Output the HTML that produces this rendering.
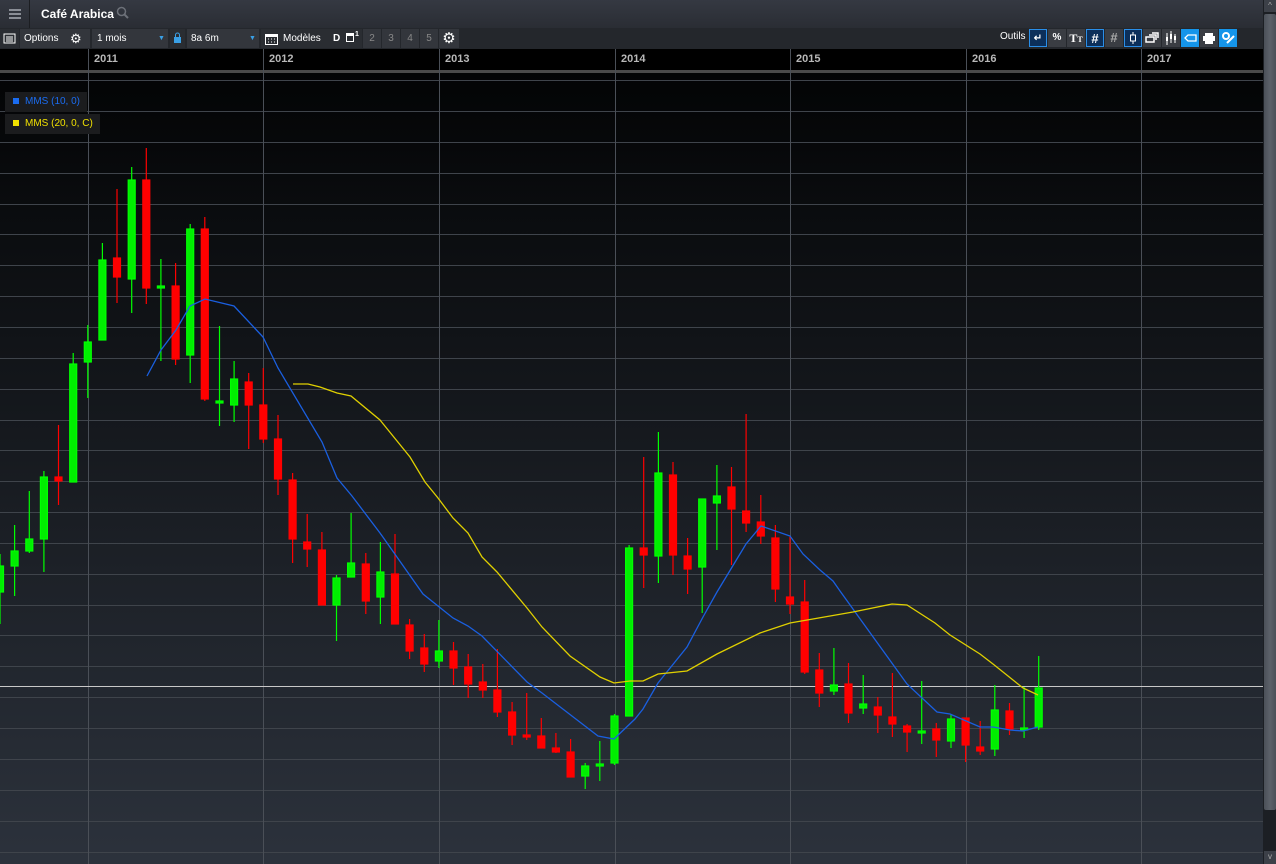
<!DOCTYPE html>
<html><head><meta charset="utf-8"><style>
*{margin:0;padding:0;box-sizing:border-box}
body{width:1276px;height:864px;overflow:hidden;background:#000;font-family:"Liberation Sans",sans-serif;position:relative}
.title{position:absolute;left:0;top:0;width:1263px;height:28px;background:linear-gradient(#353942,#2a2d34)}
.ham{position:absolute;left:0;top:0;width:30px;height:28px;border-right:1px solid #1c1e22}
.ham i{position:absolute;left:9px;width:12px;height:2px;background:#8a8e96}
.tb{position:absolute;left:0;top:28px;width:1263px;height:21px;background:#24272c}
.seg{position:absolute;top:1px;height:19px;background:#33363c;color:#fff;font-size:10px;line-height:19px}
.axis{position:absolute;left:0;top:49px;width:1263px;height:21px;background:#000}
.yr{position:absolute;top:4px;color:#b8b8b8;font-size:11px;font-weight:bold}
.btn{position:absolute;top:29px;width:18px;height:18px;background:#3a3d43;color:#fff;font-size:10px;text-align:center;line-height:18px;font-weight:bold}
.sel{background:#0c2f5a;border:1px solid #2a8ee8}
.blue{background:#1595ea}
.lg{position:absolute;left:5px;height:20px;background:#1b1c1e;font-size:10px;line-height:20px;padding-left:8px}
.lg b{display:inline-block;width:6px;height:6px;margin-right:6px;vertical-align:0px}
</style></head><body>
<div class="title"><div class="ham"><i style="top:9px"></i><i style="top:13px"></i><i style="top:17px"></i></div>
<div style="position:absolute;left:41px;top:7px;color:#fff;font-size:12px;font-weight:bold">Café Arabica</div>
<svg style="position:absolute;left:116px;top:6px" width="14" height="14"><circle cx="5.5" cy="5.5" r="4" fill="none" stroke="#6c7078" stroke-width="1.5"/><line x1="8.5" y1="8.5" x2="12" y2="12" stroke="#6c7078" stroke-width="2"/></svg>
</div>
<div class="tb">
<div class="seg" style="left:0;width:19px;background:#2a2d32"><svg width="19" height="19"><rect x="4" y="5" width="11" height="9" fill="none" stroke="#fff"/><line x1="6" y1="8" x2="13" y2="8" stroke="#fff"/><line x1="6" y1="10" x2="13" y2="10" stroke="#fff"/><line x1="6" y1="12" x2="13" y2="12" stroke="#fff"/></svg></div>
<div class="seg" style="left:20px;width:70px;padding-left:4px">Options<span style="position:absolute;left:50px;font-size:13px">⚙</span></div>
<div class="seg" style="left:92px;width:76px;padding-left:5px">1 mois<span style="position:absolute;left:66px;top:0;color:#3aa0e6;font-size:7px">▼</span></div>
<div class="seg" style="left:170px;width:15px;background:#2a2d32"><svg width="15" height="19"><rect x="4" y="8" width="7" height="6" fill="#3aa0e6"/><path d="M5.5 8V6a2 2 0 0 1 4 0v2" fill="none" stroke="#3aa0e6"/></svg></div>
<div class="seg" style="left:187px;width:72px;padding-left:4px">8a 6m<span style="position:absolute;left:62px;top:0;color:#3aa0e6;font-size:7px">▼</span></div>
<div class="seg" style="left:261px;width:66px;background:#2a2d32;padding-left:22px">Modèles<svg style="position:absolute;left:4px;top:3px" width="13" height="13"><rect x="0.5" y="2.5" width="12" height="10" fill="none" stroke="#fff"/><rect x="0" y="2" width="13" height="3" fill="#fff"/><path d="M3 7h1M6 7h1M9 7h1M3 10h1M6 10h1M9 10h1" stroke="#fff"/></svg></div>
<div class="seg" style="left:327px;width:35px;background:#2a2d32;font-weight:bold;padding-left:6px">D<span style="position:absolute;left:19px;top:4px;width:8px;height:9px;border:1.5px solid #fff;border-top-width:3px"></span><span style="position:absolute;left:28px;top:-4px;font-size:7px">1</span></div>
<div class="seg" style="left:363px;width:18px;color:#888;text-align:center">2</div>
<div class="seg" style="left:382px;width:18px;color:#888;text-align:center">3</div>
<div class="seg" style="left:401px;width:18px;color:#888;text-align:center">4</div>
<div class="seg" style="left:420px;width:18px;color:#888;text-align:center">5</div>
<div class="seg" style="left:439px;width:20px;text-align:center;font-size:15px;line-height:19px">⚙</div>
<div style="position:absolute;left:1000px;top:3px;color:#fff;font-size:10px">Outils</div>
</div>
<div class="btn sel" style="left:1029px">↵</div>
<div class="btn" style="left:1048px">%</div>
<div class="btn" style="left:1067px;font-family:'Liberation Serif',serif;font-size:12px">T<small style="font-size:8px">T</small></div>
<div class="btn sel" style="left:1086px;font-size:13px">#</div>
<div class="btn" style="left:1105px;color:#aaa;font-size:13px">#</div>
<div class="btn sel" style="left:1124px"><svg width="16" height="16"><line x1="8" y1="2" x2="8" y2="14" stroke="#fff"/><rect x="5.5" y="5" width="5" height="6" fill="#0c2f5a" stroke="#fff"/></svg></div>
<div class="btn" style="left:1143px"><svg width="18" height="18"><rect x="3" y="8" width="8" height="5" fill="none" stroke="#fff" stroke-width="1.5"/><path d="M6 6h7v5M9 4h6v5" fill="none" stroke="#fff" stroke-width="1.5"/></svg></div>
<div class="btn" style="left:1162px"><svg width="18" height="18"><path d="M5 4v12M9 2v12M13 5v9" stroke="#fff"/><rect x="4" y="8" width="2" height="4" fill="#fff"/><rect x="8" y="5" width="2" height="5" fill="#fff"/><rect x="12" y="7" width="2" height="4" fill="#fff"/></svg></div>
<div class="btn blue" style="left:1181px"><svg width="18" height="18"><path d="M4 9l3-3h8v6H7z" fill="none" stroke="#fff" stroke-width="1.3"/></svg></div>
<div class="btn" style="left:1200px"><svg width="18" height="18"><rect x="5" y="4" width="8" height="3" fill="#fff"/><rect x="3" y="7" width="12" height="5" fill="#fff"/><rect x="5" y="12" width="8" height="3" fill="#fff"/></svg></div>
<div class="btn blue" style="left:1219px"><svg width="18" height="18"><circle cx="7" cy="7" r="3" fill="none" stroke="#fff" stroke-width="2"/><line x1="8" y1="14" x2="15" y2="7" stroke="#fff" stroke-width="2"/></svg></div>
<div class="axis">
<span class="yr" style="left:94px">2011</span><span class="yr" style="left:269px">2012</span><span class="yr" style="left:445px">2013</span><span class="yr" style="left:621px">2014</span><span class="yr" style="left:796px">2015</span><span class="yr" style="left:972px">2016</span><span class="yr" style="left:1147px">2017</span>
</div>
<svg style="position:absolute;left:0;top:49px" width="1263" height="815" viewBox="0 49 1263 815">
<defs><linearGradient id="bg" x1="0" y1="0" x2="0" y2="1"><stop offset="0" stop-color="#030405"/><stop offset="1" stop-color="#2c323c"/></linearGradient></defs>
<rect x="0" y="72" width="1263" height="792" fill="url(#bg)"/>
<rect x="0" y="70" width="1263" height="3" fill="#4a4a4a"/>
<g stroke="#3f444b" stroke-width="1">
<path d="M0 80.5H1263M0 111.5H1263M0 142.5H1263M0 173.5H1263M0 204.5H1263M0 234.5H1263M0 265.5H1263M0 296.5H1263M0 327.5H1263M0 358.5H1263M0 389.5H1263M0 420.5H1263M0 450.5H1263M0 481.5H1263M0 512.5H1263M0 543.5H1263M0 574.5H1263M0 605.5H1263M0 635.5H1263M0 666.5H1263M0 697.5H1263M0 728.5H1263M0 759.5H1263M0 790.5H1263M0 821.5H1263M0 852.5H1263"/>
<path d="M88.5 49V864M263.5 49V864M439.5 49V864M615.5 49V864M790.5 49V864M966.5 49V864M1141.5 49V864" stroke="#4a4f57"/>
</g>
<line x1="0" y1="686.5" x2="1263" y2="686.5" stroke="#c8c8c8" stroke-width="1"/>
<g stroke-width="1.2">
<g stroke="#00ff00" fill="#00ee00">
<line x1="0" y1="554" x2="0" y2="624"/><rect x="-3.5" y="566" width="7" height="26"/>
<line x1="14.6" y1="525" x2="14.6" y2="596"/><rect x="11.1" y="551" width="7" height="15"/>
<line x1="29.3" y1="491" x2="29.3" y2="553"/><rect x="25.8" y="539" width="7" height="12"/>
<line x1="43.9" y1="471" x2="43.9" y2="572"/><rect x="40.4" y="477" width="7" height="62"/>
<line x1="73.2" y1="353" x2="73.2" y2="482"/><rect x="69.7" y="364" width="7" height="118"/>
<line x1="87.8" y1="325" x2="87.8" y2="398"/><rect x="84.3" y="342" width="7" height="20"/>
<line x1="102.4" y1="243" x2="102.4" y2="340"/><rect x="98.9" y="260" width="7" height="80"/>
<line x1="131.7" y1="167" x2="131.7" y2="313"/><rect x="128.2" y="180" width="7" height="99"/>
<line x1="160.9" y1="259" x2="160.9" y2="361"/><rect x="157.4" y="286" width="7" height="2"/>
<line x1="190.2" y1="224" x2="190.2" y2="383"/><rect x="186.7" y="229" width="7" height="126"/>
<line x1="219.5" y1="326" x2="219.5" y2="426"/><rect x="216" y="401" width="7" height="2"/>
<line x1="234.1" y1="361" x2="234.1" y2="422"/><rect x="230.6" y="379" width="7" height="26"/>
<line x1="336.5" y1="575" x2="336.5" y2="641"/><rect x="333" y="578" width="7" height="27"/>
<line x1="351.1" y1="513" x2="351.1" y2="577"/><rect x="347.6" y="563" width="7" height="14"/>
<line x1="380.4" y1="542" x2="380.4" y2="624"/><rect x="376.9" y="572" width="7" height="25"/>
<line x1="438.9" y1="620" x2="438.9" y2="668"/><rect x="435.4" y="651" width="7" height="10"/>
<line x1="585.2" y1="763" x2="585.2" y2="789"/><rect x="581.7" y="766" width="7" height="10"/>
<line x1="599.8" y1="741" x2="599.8" y2="781"/><rect x="596.3" y="764" width="7" height="2"/>
<line x1="614.5" y1="714" x2="614.5" y2="765"/><rect x="611" y="716" width="7" height="47"/>
<line x1="629.1" y1="545" x2="629.1" y2="716"/><rect x="625.6" y="548" width="7" height="168"/>
<line x1="658.4" y1="432" x2="658.4" y2="583"/><rect x="654.9" y="473" width="7" height="83"/>
<line x1="702.2" y1="499" x2="702.2" y2="613"/><rect x="698.7" y="499" width="7" height="68"/>
<line x1="716.9" y1="465" x2="716.9" y2="550"/><rect x="713.4" y="496" width="7" height="7"/>
<line x1="833.9" y1="648" x2="833.9" y2="695"/><rect x="830.4" y="685" width="7" height="6"/>
<line x1="863.2" y1="675" x2="863.2" y2="714"/><rect x="859.7" y="704" width="7" height="4"/>
<line x1="921.7" y1="681" x2="921.7" y2="744"/><rect x="918.2" y="731" width="7" height="2"/>
<line x1="951" y1="715" x2="951" y2="748"/><rect x="947.5" y="719" width="7" height="22"/>
<line x1="994.8" y1="685" x2="994.8" y2="756"/><rect x="991.3" y="710" width="7" height="39"/>
<line x1="1024.1" y1="687" x2="1024.1" y2="738"/><rect x="1020.6" y="728" width="7" height="2"/>
<line x1="1038.7" y1="656" x2="1038.7" y2="730"/><rect x="1035.2" y="688" width="7" height="39"/>
</g>
<g stroke="#ff0000" fill="#ff0000">
<line x1="58.5" y1="425" x2="58.5" y2="505"/><rect x="55" y="477" width="7" height="4"/>
<line x1="117" y1="189" x2="117" y2="303"/><rect x="113.5" y="258" width="7" height="19"/>
<line x1="146.3" y1="148" x2="146.3" y2="304"/><rect x="142.8" y="180" width="7" height="108"/>
<line x1="175.6" y1="263" x2="175.6" y2="365"/><rect x="172.1" y="286" width="7" height="73"/>
<line x1="204.8" y1="217" x2="204.8" y2="401"/><rect x="201.3" y="229" width="7" height="170"/>
<line x1="248.7" y1="373" x2="248.7" y2="449"/><rect x="245.2" y="382" width="7" height="23"/>
<line x1="263.3" y1="368" x2="263.3" y2="443"/><rect x="259.8" y="405" width="7" height="34"/>
<line x1="278" y1="415" x2="278" y2="495"/><rect x="274.5" y="439" width="7" height="40"/>
<line x1="292.6" y1="473" x2="292.6" y2="563"/><rect x="289.1" y="480" width="7" height="59"/>
<line x1="307.2" y1="514" x2="307.2" y2="567"/><rect x="303.7" y="542" width="7" height="7"/>
<line x1="321.9" y1="532" x2="321.9" y2="605"/><rect x="318.4" y="550" width="7" height="55"/>
<line x1="365.8" y1="553" x2="365.8" y2="614"/><rect x="362.3" y="564" width="7" height="37"/>
<line x1="395" y1="534" x2="395" y2="624"/><rect x="391.5" y="574" width="7" height="50"/>
<line x1="409.6" y1="619" x2="409.6" y2="659"/><rect x="406.1" y="625" width="7" height="26"/>
<line x1="424.3" y1="634" x2="424.3" y2="672"/><rect x="420.8" y="648" width="7" height="16"/>
<line x1="453.5" y1="642" x2="453.5" y2="685"/><rect x="450" y="651" width="7" height="17"/>
<line x1="468.2" y1="654" x2="468.2" y2="698"/><rect x="464.7" y="667" width="7" height="17"/>
<line x1="482.8" y1="664" x2="482.8" y2="698"/><rect x="479.3" y="682" width="7" height="8"/>
<line x1="497.4" y1="649" x2="497.4" y2="717"/><rect x="493.9" y="690" width="7" height="22"/>
<line x1="512.1" y1="702" x2="512.1" y2="745"/><rect x="508.6" y="712" width="7" height="23"/>
<line x1="526.7" y1="693" x2="526.7" y2="740"/><rect x="523.2" y="735" width="7" height="2"/>
<line x1="541.3" y1="718" x2="541.3" y2="748"/><rect x="537.8" y="736" width="7" height="12"/>
<line x1="555.9" y1="733" x2="555.9" y2="753"/><rect x="552.4" y="748" width="7" height="4"/>
<line x1="570.6" y1="739" x2="570.6" y2="777"/><rect x="567.1" y="752" width="7" height="25"/>
<line x1="643.7" y1="457" x2="643.7" y2="588"/><rect x="640.2" y="548" width="7" height="7"/>
<line x1="673" y1="462" x2="673" y2="575"/><rect x="669.5" y="475" width="7" height="80"/>
<line x1="687.6" y1="538" x2="687.6" y2="594"/><rect x="684.1" y="556" width="7" height="13"/>
<line x1="731.5" y1="467" x2="731.5" y2="565"/><rect x="728" y="487" width="7" height="22"/>
<line x1="746.1" y1="414" x2="746.1" y2="532"/><rect x="742.6" y="511" width="7" height="12"/>
<line x1="760.8" y1="495" x2="760.8" y2="544"/><rect x="757.3" y="522" width="7" height="14"/>
<line x1="775.4" y1="525" x2="775.4" y2="602"/><rect x="771.9" y="538" width="7" height="51"/>
<line x1="790" y1="537" x2="790" y2="614"/><rect x="786.5" y="597" width="7" height="7"/>
<line x1="804.7" y1="580" x2="804.7" y2="674"/><rect x="801.2" y="602" width="7" height="70"/>
<line x1="819.3" y1="653" x2="819.3" y2="707"/><rect x="815.8" y="670" width="7" height="23"/>
<line x1="848.5" y1="663" x2="848.5" y2="723"/><rect x="845" y="684" width="7" height="29"/>
<line x1="877.8" y1="697" x2="877.8" y2="733"/><rect x="874.3" y="707" width="7" height="8"/>
<line x1="892.4" y1="673" x2="892.4" y2="737"/><rect x="888.9" y="717" width="7" height="7"/>
<line x1="907.1" y1="724" x2="907.1" y2="752"/><rect x="903.6" y="726" width="7" height="6"/>
<line x1="936.3" y1="723" x2="936.3" y2="757"/><rect x="932.8" y="729" width="7" height="11"/>
<line x1="965.6" y1="718" x2="965.6" y2="762"/><rect x="962.1" y="718" width="7" height="27"/>
<line x1="980.2" y1="721" x2="980.2" y2="755"/><rect x="976.7" y="747" width="7" height="4"/>
<line x1="1009.5" y1="703" x2="1009.5" y2="735"/><rect x="1006" y="711" width="7" height="18"/>
</g>
</g>
<polyline fill="none" stroke="#1a5fe0" stroke-width="1.3" points="147,376 161,350 176,330 190,306 205,299 234,306 263,337 278,368 322,442 337,478 352,496 380,533 423,594 453,618 468,626 482,636 527,682 542,693 598,736 614,739 635,719 643,709 658,683 687,647 703,617 717,592 746,544 761,526 790,536 803,554 820,570 833,581 840,591 907,684 937,712 950,714 980,727 993,727 1010,730 1023,731 1038,727"/>
<polyline fill="none" stroke="#e0d000" stroke-width="1.3" points="293,384 308,384 320,387 337,393 351,396 380,420 410,457 425,482 438,498 453,518 468,533 482,557 497,572 527,608 542,627 570,656 600,677 614,683 630,681 643,681 658,674 687,671 717,654 760,633 790,623 853,612 892,604 907,605 935,623 950,635 980,654 993,664 1023,688 1038,695"/>
</svg>
<div class="lg" style="top:92px;width:82px;color:#1a6cf0"><b style="background:#1a6cf0"></b>MMS (10, 0)</div>
<div class="lg" style="top:114px;width:95px;color:#f0e000"><b style="background:#f0e000"></b>MMS (20, 0, C)</div>
<div style="position:absolute;left:1263px;top:0;width:13px;height:864px;background:#1c1f24">
<div style="position:absolute;left:1px;top:0;width:12px;height:12px;background:#3c4048;color:#aaa;font-size:8px;text-align:center;line-height:12px">^</div>
<div style="position:absolute;left:1px;top:14px;width:12px;height:796px;background:linear-gradient(90deg,#4b5058,#5c616a,#4b5058);border-radius:2px"></div>
<div style="position:absolute;left:1px;top:851px;width:12px;height:13px;background:#3c4048;color:#aaa;font-size:8px;text-align:center;line-height:12px">v</div>
</div>
</body></html>
